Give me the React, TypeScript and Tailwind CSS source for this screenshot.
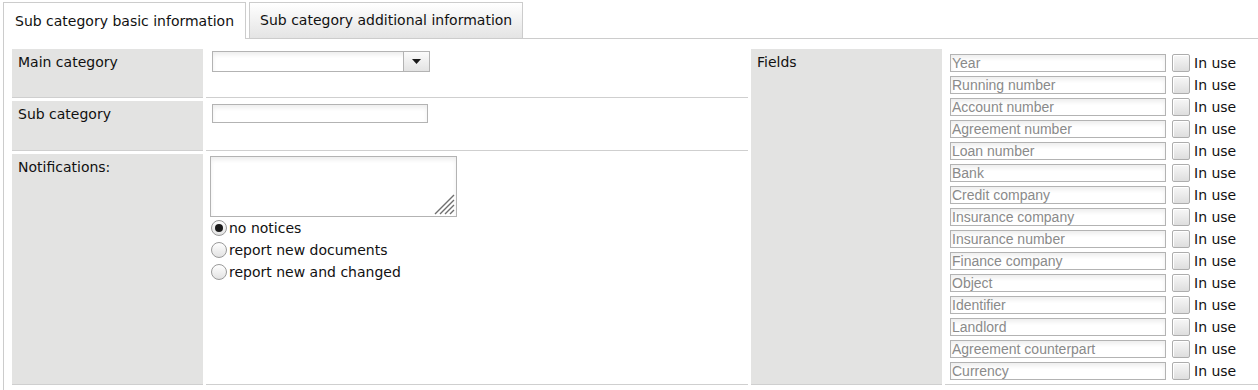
import React from 'react'

// ─── Data ─────────────────────────────────────────────────────────────────────

const fields = [
  'Year',
  'Running number',
  'Account number',
  'Agreement number',
  'Loan number',
  'Bank',
  'Credit company',
  'Insurance company',
  'Insurance number',
  'Finance company',
  'Object',
  'Identifier',
  'Landlord',
  'Agreement counterpart',
  'Currency',
]

const notices = ['no notices', 'report new documents', 'report new and changed']

const font = "font-['DejaVu_Sans',sans-serif]"
const inputBox =
  'border border-[#b3b3b3] bg-white shadow-[inset_0_3px_4px_rgba(0,0,0,0.07)]'

// ─── Small pieces ─────────────────────────────────────────────────────────────

function Radio({ checked }: { checked?: boolean }) {
  return (
    <div className="flex h-[16px] w-[16px] shrink-0 items-center justify-center rounded-full border border-[#9a9a9a] bg-gradient-to-b from-[#ffffff] to-[#e2e2e2]">
      {checked && <div className="h-[8px] w-[8px] rounded-full bg-[#1b1b1b]" />}
    </div>
  )
}

function Checkbox() {
  return (
    <div className="h-[18px] w-[18px] shrink-0 rounded-[2px] border border-[#adadad] bg-gradient-to-b from-[#f7f7f7] to-[#dedede] shadow-[inset_1px_1px_0_#ffffff]" />
  )
}

function Select() {
  return (
    <div className={`flex h-[21px] w-[218px] ${inputBox}`}>
      <div className="flex-1" />
      <div className="flex w-[26px] items-center justify-center border-l border-[#b3b3b3] bg-gradient-to-b from-[#fbfbfb] to-[#e3e3e3]">
        <svg width="9" height="5" viewBox="0 0 9 5">
          <path d="M0 0h9L4.5 5z" fill="#1a1a1a" />
        </svg>
      </div>
    </div>
  )
}

function TextArea() {
  return (
    <div className={`relative h-[61px] w-[247px] ${inputBox}`}>
      <svg className="absolute bottom-[1px] right-[1px]" width="22" height="22" viewBox="0 0 22 22">
        <path
          d="M21 2L2 21M21 7L7 21M21 12L12 21M21 17L17 21"
          stroke="#6f6f6f"
          strokeWidth="1.4"
        />
      </svg>
    </div>
  )
}

// ─── Tabs ─────────────────────────────────────────────────────────────────────

function Tabs() {
  return (
    <div className={`flex h-[39px] items-end pl-[3px] pt-[2px] text-[14px] text-[#111] ${font}`}>
      <div className="flex h-[37px] items-center border-x border-t border-[#cccccc] bg-white px-[11px]">
        Sub category basic information
      </div>
      <div className="h-full w-[3px] border-b border-[#cccccc]" />
      <div className="flex h-[37px] items-center border border-[#cccccc] bg-gradient-to-b from-[#ffffff] to-[#e4e4e4] px-[10px]">
        Sub category additional information
      </div>
      <div className="h-full flex-1 border-b border-[#cccccc]" />
    </div>
  )
}

// ─── Main component ───────────────────────────────────────────────────────────

export default function App() {
  const label = 'bg-[#e3e3e2] border-b border-[#cfcfcf] px-[6px] pt-[5px] leading-[17px]'
  const value = 'bg-white border-b border-[#cfcfcf]'

  return (
    <div className={`h-[390px] w-[1258px] overflow-hidden bg-white text-[14px] text-[#111] ${font}`}>
      <Tabs />
      <div className="ml-[3px] h-[351px] border-l border-[#cccccc] pl-[8px] pt-[10px]">
        <div className="grid grid-cols-[191px_542px_191px_1fr] grid-rows-[49px_50px_231px] gap-[3px]">
          <div className={label}>Main category</div>
          <div className={`${value} pl-[6px] pt-[2px]`}>
            <Select />
          </div>

          <div className={`${label} row-span-3`}>Fields</div>
          <div className={`${value} row-span-3 pl-[5px] pt-[5px]`}>
            <div className="flex flex-col gap-[4px]">
              {fields.map((f) => (
                <div key={f} className="flex h-[18px] items-center">
                  <div
                    className={`h-[18px] w-[216px] px-[1px] text-[14px] leading-[16px] text-[#8a8a8a] font-['Liberation_Sans',Arial,sans-serif] ${inputBox}`}
                  >
                    {f}
                  </div>
                  <div className="ml-[6px]">
                    <Checkbox />
                  </div>
                  <div className="ml-[4px] text-[14px] leading-[16px] text-[#111]">In use</div>
                </div>
              ))}
            </div>
          </div>

          <div className={label}>Sub category</div>
          <div className={`${value} pl-[6px] pt-[3px]`}>
            <div className={`h-[19px] w-[216px] ${inputBox}`} />
          </div>

          <div className={label}>Notifications:</div>
          <div className={`${value} pl-[4px] pt-[2px]`}>
            <TextArea />
            <div className="flex flex-col">
              {notices.map((n, i) => (
                <label key={n} className="flex h-[22px] items-center gap-[2px] pl-[1px] leading-[17px]">
                  <Radio checked={i === 0} />
                  <span>{n}</span>
                </label>
              ))}
            </div>
          </div>
        </div>
      </div>
    </div>
  )
}
